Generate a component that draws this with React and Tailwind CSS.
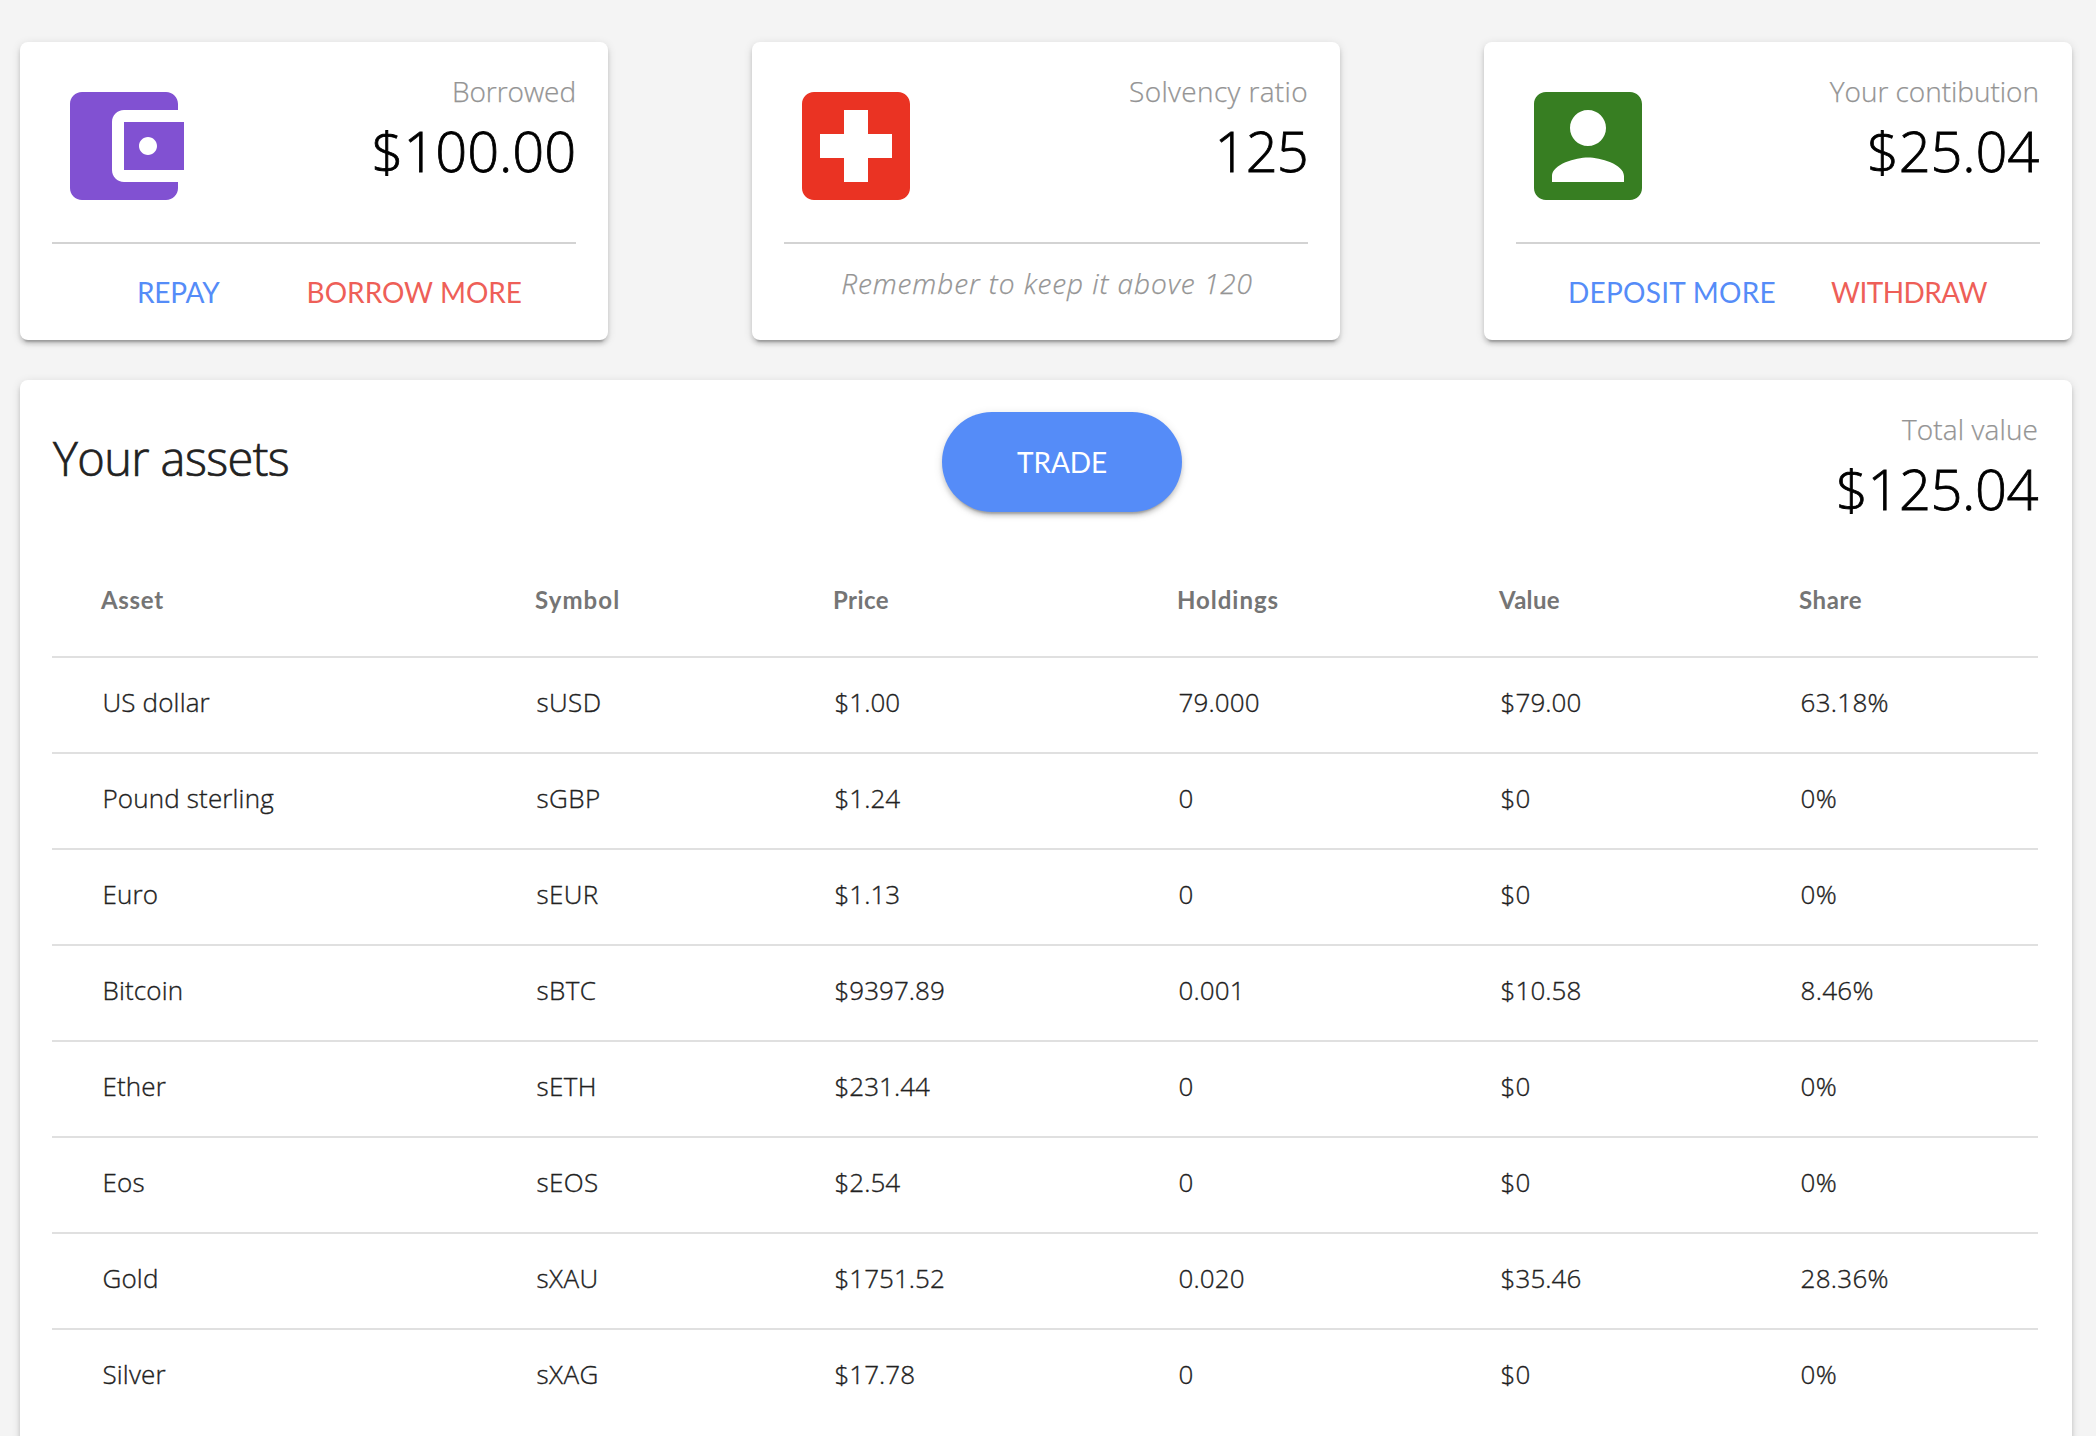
import React from "react";

const elevation =
  "shadow-[0_6px_2px_-4px_rgba(0,0,0,0.2),0_4px_4px_0_rgba(0,0,0,0.14),0_2px_10px_0_rgba(0,0,0,0.12)]";

const assets = [
  ["US dollar", "sUSD", "$1.00", "79.000", "$79.00", "63.18%"],
  ["Pound sterling", "sGBP", "$1.24", "0", "$0", "0%"],
  ["Euro", "sEUR", "$1.13", "0", "$0", "0%"],
  ["Bitcoin", "sBTC", "$9397.89", "0.001", "$10.58", "8.46%"],
  ["Ether", "sETH", "$231.44", "0", "$0", "0%"],
  ["Eos", "sEOS", "$2.54", "0", "$0", "0%"],
  ["Gold", "sXAU", "$1751.52", "0.020", "$35.46", "28.36%"],
  ["Silver", "sXAG", "$17.78", "0", "$0", "0%"],
];

const columns = [
  ["Asset", "tracking-[0.7px]", "tracking-[0.15px]"],
  ["Symbol", "tracking-[1.1px]", "tracking-[0.4px]"],
  ["Price", "tracking-[0.4px]", "tracking-[0.03px]"],
  ["Holdings", "tracking-[0.96px]", "tracking-[0.15px]"],
  ["Value", "tracking-[0.3px]", "tracking-[0.1px]"],
  ["Share", "tracking-[0.6px]", "tracking-[0.3px]"],
];

const gridColumns = "grid grid-cols-[434px_298px_344px_322px_300px_1fr]";

function Icon({ color, d }) {
  return (
    <svg viewBox="0 0 24 24" className={`size-36 fill-current ${color}`}>
      <path d={d} />
    </svg>
  );
}

function Stat({ label, labelTracking, value, valueTracking }) {
  return (
    <div className="flex flex-col items-end font-['Open_Sans',sans-serif] font-light whitespace-nowrap">
      <div className={`text-[28px] leading-[34px] text-[#949494] [-webkit-text-stroke:0.25px] ${labelTracking}`}>{label}</div>
      <div className={`mt-2 text-[56px] leading-[68px] text-black [-webkit-text-stroke:0.8px] ${valueTracking}`}>{value}</div>
    </div>
  );
}

function StatCard({ icon, stat, children }) {
  return (
    <section className={`flex h-[298px] w-[588px] flex-col rounded-[8px] bg-white px-8 pt-8 ${elevation}`}>
      <div className="flex h-[168px] justify-between">
        {icon}
        {stat}
      </div>
      <div className="h-[2px] shrink-0 bg-[#d3d3d3]" />
      {children}
    </section>
  );
}

export default function App() {
  return (
    <main className="h-[1436px] w-[2096px] overflow-hidden bg-[#f4f4f4] px-5 pt-[42px] pr-6 font-['Lato',sans-serif]">
      <div className="flex justify-between">
        <StatCard
          icon={
            <Icon
              color="text-[#8151d2]"
              d="M21 18v1c0 1.100-.9 2-2 2H5c-1.110 0-2-.9-2-2V5c0-1.100.89-2 2-2h14c1.100 0 2 .9 2 2v1h-9c-1.110 0-2 .9-2 2v8c0 1.100.89 2 2 2h9zm-9-2h10V8H12v8zm4-2.500c-.83 0-1.500-.67-1.500-1.500s.67-1.500 1.500-1.500 1.500.67 1.500 1.500-.67 1.500-1.500 1.500z"
            />
          }
          stat={<Stat label="Borrowed" labelTracking="tracking-[-0.06px]" value="$100.00" valueTracking="tracking-[-0.1px]" />}
        >
          <div className="flex gap-[87px] pt-[31px] pl-[85px] text-[28px] leading-[34px] whitespace-nowrap">
            <button className="tracking-[-0.2px] text-[#558cf8]">REPAY</button>
            <button className="text-[#ee5f58]">BORROW MORE</button>
          </div>
        </StatCard>
        <StatCard
          icon={
            <Icon
              color="text-[#ea3323]"
              d="M19 3H5c-1.100 0-2 .9-2 2v14c0 1.100.9 2 2 2h14c1.100 0 2-.9 2-2V5c0-1.100-.9-2-2-2zm-1 11h-4v4h-4v-4H6v-4h4V6h4v4h4v4z"
            />
          }
          stat={<Stat label="Solvency ratio" labelTracking="tracking-[0.35px]" value="125" valueTracking="tracking-[-0.8px]" />}
        >
          <div className="pt-[22px] pl-[2px] text-center font-['Open_Sans',sans-serif] text-[28px] leading-[34px] font-light tracking-[0.95px] whitespace-nowrap text-[#949494] italic [-webkit-text-stroke:0.25px]">
            Remember to keep it above 120
          </div>
        </StatCard>
        <StatCard
          icon={
            <Icon
              color="text-[#377e22]"
              d="M3 5v14c0 1.100.89 2 2 2h14c1.100 0 2-.9 2-2V5c0-1.100-.9-2-2-2H5c-1.110 0-2 .9-2 2zm12 4c0 1.660-1.340 3-3 3s-3-1.340-3-3 1.340-3 3-3 3 1.340 3 3zm-9 8c0-2 4-3.100 6-3.100s6 1.100 6 3.100v1H6v-1z"
            />
          }
          stat={
            <div className="pr-px">
              <Stat label="Your contibution" labelTracking="tracking-[-0.03px]" value="$25.04" valueTracking="tracking-[-0.2px]" />
            </div>
          }
        >
          <div className="flex gap-[55px] pt-[31px] pl-[52px] text-[28px] leading-[34px] whitespace-nowrap">
            <button className="tracking-[0.27px] text-[#558cf8]">DEPOSIT MORE</button>
            <button className="tracking-[-0.55px] text-[#ee5f58]">WITHDRAW</button>
          </div>
        </StatCard>
      </div>

      <section className={`mt-10 h-[1100px] rounded-[8px] bg-white pt-8 pr-[34px] pl-8 ${elevation}`}>
        <div className="grid h-[130px] grid-cols-[890px_240px_1fr] items-start">
          <h1 className="mt-[17px] pl-px font-['Open_Sans',sans-serif] text-[47px] leading-[58px] font-light tracking-[-0.6px] text-[#212121] [-webkit-text-stroke:0.7px]">
            Your assets
          </h1>
          <button
            className={`h-[100px] rounded-full bg-[#558cf8] text-[28px] tracking-[-0.1px] text-white ${elevation}`}
          >
            TRADE
          </button>
          <Stat label="Total value" labelTracking="tracking-[0.1px]" value="$125.04" valueTracking="tracking-[-0.45px]" />
        </div>

        <div className={`h-[116px] items-center border-b-2 border-[#e0e0e0] pt-[2px] pl-[49px] text-[24px] font-bold text-[#757575] ${gridColumns}`}>
          {columns.map(([name, headTracking]) => (
            <div key={name} className={headTracking}>{name}</div>
          ))}
        </div>
        {assets.map((row) => (
          <div
            key={row[1]}
            className={`h-24 items-center border-b-2 border-[#e0e0e0] pb-[6px] pl-[50.500px] font-['Open_Sans',sans-serif] text-[26px] font-light text-[#212121] last:border-transparent [-webkit-text-stroke:0.35px] ${gridColumns}`}
          >
            {row.map((cell, i) => (
              <div key={columns[i][0]} className={columns[i][2]}>{cell}</div>
            ))}
          </div>
        ))}
      </section>
    </main>
  );
}
